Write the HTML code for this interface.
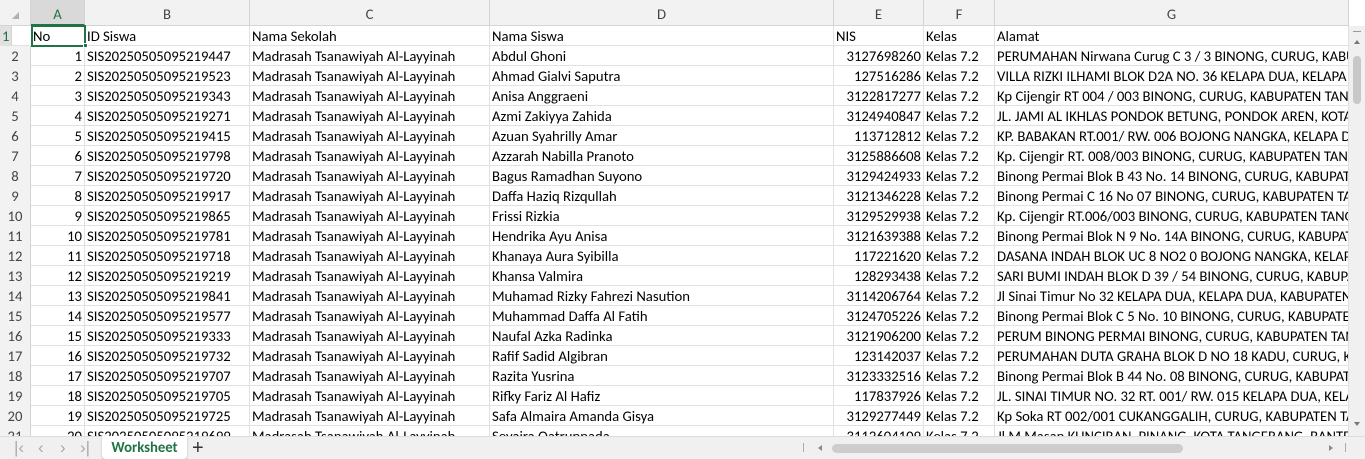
<!DOCTYPE html>
<html><head><meta charset="utf-8"><style>
*{margin:0;padding:0;box-sizing:border-box}
body{width:1365px;height:459px;overflow:hidden;background:#fff;font-family:"Carlito","Liberation Sans",sans-serif;font-size:14.7px;color:#000;position:relative}
.hdr{position:absolute;top:0;left:0;width:1349px;height:26px;background:#f2f2f2;border-bottom:1px solid #d4d4d4}
.ch{position:absolute;top:0;height:26px;line-height:28px;text-align:center;color:#444;border-right:1px solid #d4d4d4;font-size:14.7px}
.grid{position:absolute;top:26px;left:0;width:1349px;height:410px;overflow:hidden}
.row{position:absolute;left:0;height:20px;width:1349px;border-bottom:1px solid #e1e1e1}
.c{position:absolute;top:0;height:20px;line-height:21px;border-right:1px solid #e1e1e1;overflow:hidden;white-space:nowrap;padding:0 2px}
.rh{background:#f2f2f2;color:#444;text-align:center;border-right:1px solid #d4d4d4}
.r{text-align:right}
.bar{position:absolute;top:436px;left:0;width:1365px;height:23px;background:#f0f0f0;border-top:1px solid #ddd}
.vs{position:absolute;top:26px;left:1349px;width:16px;height:410px;background:#f0f0f0}
</style></head><body>
<div class="hdr">
<div class="ch" style="left:0;width:31px"><span style="position:absolute;left:12px;top:12px;width:0;height:0;border-left:7px solid transparent;border-bottom:7px solid #b0b0b0"></span></div>
<div class="ch" style="left:31px;width:54px;background:#d9d9d9;color:#217346;border-bottom:2px solid #217346">A</div>
<div class="ch" style="left:85px;width:165px">B</div>
<div class="ch" style="left:250px;width:240px">C</div>
<div class="ch" style="left:490px;width:344px">D</div>
<div class="ch" style="left:834px;width:90px">E</div>
<div class="ch" style="left:924px;width:71px">F</div>
<div class="ch" style="left:995px;width:354px">G</div>
</div>
<div class="grid" id="g"></div>
<div style="position:absolute;left:31px;top:25px;width:55px;height:22px;border:2px solid #217346"></div>
<div style="position:absolute;left:83px;top:43px;width:5px;height:5px;background:#217346;border:1px solid #fff"></div>
<div class="vs">
<div style="position:absolute;left:4px;top:5px;width:8px;height:1px;background:#999"></div>
<div style="position:absolute;left:5px;top:14px;border-left:3px solid transparent;border-right:3px solid transparent;border-bottom:4px solid #777"></div>
<div style="position:absolute;left:4px;top:30px;width:8px;height:48px;background:#c8c8c8;border-radius:4px"></div>
<div style="position:absolute;left:5px;top:396px;border-left:3px solid transparent;border-right:3px solid transparent;border-top:4px solid #777"></div>
</div>
<div class="bar">
<span style="position:absolute;left:14px;top:1px;color:#aaa;font-size:17px;font-family:'Liberation Sans',sans-serif">|‹</span>
<span style="position:absolute;left:38px;top:1px;color:#aaa;font-size:17px;font-family:'Liberation Sans',sans-serif">‹</span>
<span style="position:absolute;left:60px;top:1px;color:#aaa;font-size:17px;font-family:'Liberation Sans',sans-serif">›</span>
<span style="position:absolute;left:80px;top:1px;color:#aaa;font-size:17px;font-family:'Liberation Sans',sans-serif">›|</span>
<div style="position:absolute;left:102px;top:-1px;width:85px;height:23px;background:#fff;border-radius:0 0 4px 4px;box-shadow:0 1px 2px #bbb;color:#217346;font-weight:bold;text-align:center;line-height:23px">Worksheet</div>
<span style="position:absolute;left:192px;top:0;font-size:20px;color:#333;line-height:22px;font-family:'Liberation Sans',sans-serif">+</span>
<div style="position:absolute;left:803px;top:6px;width:1px;height:9px;background:#aaa"></div>
<div style="position:absolute;left:818px;top:8px;border-top:3px solid transparent;border-bottom:3px solid transparent;border-right:4px solid #888"></div>
<div style="position:absolute;left:832px;top:7px;width:351px;height:9px;background:#cdcdcd;border-radius:5px"></div>
<div style="position:absolute;left:1329px;top:8px;border-top:3px solid transparent;border-bottom:3px solid transparent;border-left:4px solid #888"></div>
<div style="position:absolute;left:1345px;top:6px;width:1px;height:9px;background:#aaa"></div>
</div>
<script>
var d=[
["SIS20250505095219447","Abdul Ghoni","3127698260","PERUMAHAN Nirwana Curug C 3 / 3 BINONG, CURUG, KABUPATEN"],
["SIS20250505095219523","Ahmad Gialvi Saputra","127516286","VILLA RIZKI ILHAMI BLOK D2A NO. 36 KELAPA DUA, KELAPA DUA"],
["SIS20250505095219343","Anisa Anggraeni","3122817277","Kp Cijengir RT 004 / 003 BINONG, CURUG, KABUPATEN TANGERANG"],
["SIS20250505095219271","Azmi Zakiyya Zahida","3124940847","JL. JAMI AL IKHLAS PONDOK BETUNG, PONDOK AREN, KOTA"],
["SIS20250505095219415","Azuan Syahrilly Amar","113712812","KP. BABAKAN RT.001/ RW. 006 BOJONG NANGKA, KELAPA DUA"],
["SIS20250505095219798","Azzarah Nabilla Pranoto","3125886608","Kp. Cijengir RT. 008/003 BINONG, CURUG, KABUPATEN TANGERANG"],
["SIS20250505095219720","Bagus Ramadhan Suyono","3129424933","Binong Permai Blok B 43 No. 14 BINONG, CURUG, KABUPATEN"],
["SIS20250505095219917","Daffa Haziq Rizqullah","3121346228","Binong Permai C 16 No 07 BINONG, CURUG, KABUPATEN TANGERANG"],
["SIS20250505095219865","Frissi Rizkia","3129529938","Kp. Cijengir RT.006/003 BINONG, CURUG, KABUPATEN TANGERANG"],
["SIS20250505095219781","Hendrika Ayu Anisa","3121639388","Binong Permai Blok N 9 No. 14A BINONG, CURUG, KABUPATEN"],
["SIS20250505095219718","Khanaya Aura Syibilla","117221620","DASANA INDAH BLOK UC 8 NO2 0 BOJONG NANGKA, KELAPA DUA"],
["SIS20250505095219219","Khansa Valmira","128293438","SARI BUMI INDAH BLOK D 39 / 54 BINONG, CURUG, KABUPATEN"],
["SIS20250505095219841","Muhamad Rizky Fahrezi Nasution","3114206764","Jl Sinai Timur No 32 KELAPA DUA, KELAPA DUA, KABUPATEN"],
["SIS20250505095219577","Muhammad Daffa Al Fatih","3124705226","Binong Permai Blok C 5 No. 10 BINONG, CURUG, KABUPATEN"],
["SIS20250505095219333","Naufal Azka Radinka","3121906200","PERUM BINONG PERMAI BINONG, CURUG, KABUPATEN TANGERANG"],
["SIS20250505095219732","Rafif Sadid Algibran","123142037","PERUMAHAN DUTA GRAHA BLOK D NO 18 KADU, CURUG, KABUPATEN"],
["SIS20250505095219707","Razita Yusrina","3123332516","Binong Permai Blok B 44 No. 08 BINONG, CURUG, KABUPATEN"],
["SIS20250505095219705","Rifky Fariz Al Hafiz","117837926","JL. SINAI TIMUR NO. 32 RT. 001/ RW. 015 KELAPA DUA, KELAPA"],
["SIS20250505095219725","Safa Almaira Amanda Gisya","3129277449","Kp Soka RT 002/001 CUKANGGALIH, CURUG, KABUPATEN TANGERANG"],
["SIS20250505095219699","Sevaira Qatrunnada","3112604109","Jl M Masan KUNCIRAN, PINANG, KOTA TANGERANG, BANTEN"]];
var cols=[[0,31],[31,54],[85,165],[250,240],[490,344],[834,90],[924,71],[995,354]];
var h="";
function cell(i,t,cls){return '<div class="c '+(cls||'')+'" style="left:'+cols[i][0]+'px;width:'+cols[i][1]+'px">'+t+'</div>';}
h+='<div class="row" style="top:0">'+cell(0,'1','rh" style="color:#217346;background:#e1e1e1')+cell(1,'No')+cell(2,'ID Siswa')+cell(3,'Nama Sekolah')+cell(4,'Nama Siswa')+cell(5,'NIS')+cell(6,'Kelas')+cell(7,'Alamat')+'</div>';
for(var i=0;i<d.length;i++){var r=d[i];
h+='<div class="row" style="top:'+((i+1)*20)+'px">'+cell(0,i+2,'rh')+cell(1,i+1,'r')+cell(2,r[0])+cell(3,'Madrasah Tsanawiyah Al-Layyinah')+cell(4,r[1])+cell(5,r[2],'r')+cell(6,'Kelas 7.2')+cell(7,r[3])+'</div>';}
document.getElementById('g').innerHTML=h;
</script>
</body></html>
